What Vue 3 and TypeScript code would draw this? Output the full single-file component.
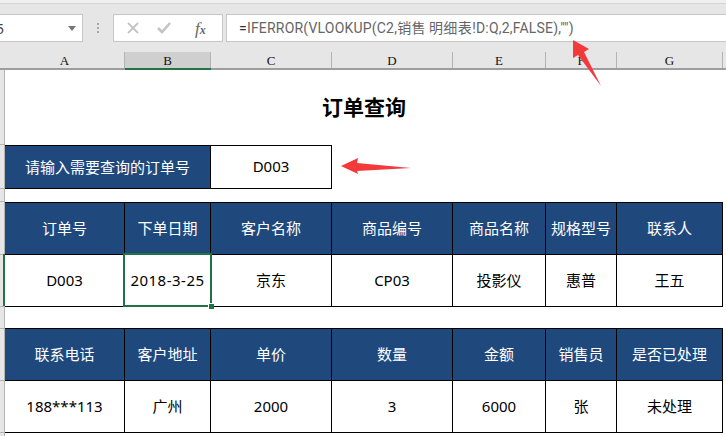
<script setup lang="ts">
const cols = [
  { name: 'A', w: 120 }, { name: 'B', w: 86 }, { name: 'C', w: 121 }, { name: 'D', w: 121 },
  { name: 'E', w: 93 }, { name: 'F', w: 71 }, { name: 'G', w: 106 },
]
const table1 = {
  head: ['订单号', '下单日期', '客户名称', '商品编号', '商品名称', '规格型号', '联系人'],
  body: ['D003', '2018-3-25', '京东', 'CP03', '投影仪', '惠普', '王五'],
}
const table2 = {
  head: ['联系电话', '客户地址', '单价', '数量', '金额', '销售员', '是否已处理'],
  body: ['188***113', '广州', '2000', '3', '6000', '张', '未处理'],
}
const tables = [table1, table2]
const ticks = [75, 44, 13, 53, 52, 22, 52, 52]
</script>

<template>
  <div class="app">
    <div class="ribbon-edge"></div>
    <div class="formula-row">
      <div class="name-box"><span class="name-text">5</span><span class="caret"></span></div>
      <div class="dots"><i></i><i></i><i></i></div>
      <div class="fx-box">
        <svg width="14" height="14" viewBox="0 0 14 14" class="ico"><path d="M2 2 L12 12 M12 2 L2 12" stroke="#c4c4c4" stroke-width="1.8" fill="none"/></svg>
        <svg width="16" height="14" viewBox="0 0 16 14" class="ico"><path d="M2 7 L6 11 L14 2" stroke="#c4c4c4" stroke-width="2.6" fill="none"/></svg>
        <span class="fx">f<small>x</small></span>
      </div>
      <div class="formula"><span class="eq">=</span><span class="fn">IFERROR(VLOOKUP(C2,<span class="cjk">销售</span><span class="cjk gap">明细表</span>!D:Q,2,FALSE),"")</span></div>
    </div>
    <div class="col-heads">
      <div class="corner"></div>
      <div v-for="c in cols" :key="c.name" class="col-head" :class="{ active: c.name === 'B' }" :style="{ width: c.w + 'px' }">{{ c.name }}</div>
    </div>
    <div class="sheet">
      <div class="row-strip">
        <i v-for="(h, k) in ticks" :key="k" :style="{ height: h + 'px' }"></i>
      </div>
      <div class="content">
        <h1 class="title">订单查询</h1>
        <div class="query">
          <div class="q-label">请输入需要查询的订单号</div>
          <div class="q-value">D003</div>
        </div>
        <div v-for="(t, i) in tables" :key="i" class="tbl" :class="'tbl' + i">
          <div v-for="(h, j) in t.head" :key="h" class="th" :style="{ width: cols[j].w + 'px' }">{{ h }}</div>
          <div v-for="(b, j) in t.body" :key="b" class="td" :class="{ date: b === '2018-3-25' }" :style="{ width: cols[j].w + 'px' }">{{ b }}</div>
        </div>
      </div>
      <div class="selection"><span class="handle"></span></div>
      <div class="row-mark"></div>
    </div>
    <svg class="arrow" width="726" height="436" viewBox="0 0 726 436">
      <path d="M341 166 L358 158 L357 163 L411 168 L357 171 L358 174 Z" fill="#f4393b"/>
      <path d="M573 40 L589 49 L584 52 L601 86 L578 55 L573 58 Z" fill="#f4393b"/>
    </svg>
  </div>
</template>

<style>
html, body { margin: 0; background: #fff; }
</style>

<style scoped>
.app {
  position: relative;
  width: 726px;
  height: 436px;
  overflow: hidden;
  background: #fff;
  font-family: "Noto Sans", "Noto Sans CJK SC", sans-serif;
  color: #000;
}
.ribbon-edge {
  height: 3px;
  background: #f0f0f0;
  border-bottom: 1px solid #d4d4d4;
}
.formula-row {
  height: 48px;
  box-sizing: border-box;
  background: #e6e6e6;
  display: flex;
  align-items: flex-start;
  padding-top: 10px;
}
.name-box {
  width: 83px;
  height: 28px;
  box-sizing: border-box;
  background: #fff;
  border: 1px solid #c6c6c6;
  border-left: 0;
  display: flex;
  align-items: center;
  justify-content: space-between;
  padding-right: 6px;
  color: #444;
  font-size: 14px;
}
.name-text { margin-left: -4px; }
.caret {
  width: 0;
  height: 0;
  border: 4px solid transparent;
  border-top: 5px solid #777;
  border-bottom: 0;
}
.dots {
  width: 30px;
  height: 28px;
  display: flex;
  flex-direction: column;
  align-items: center;
  justify-content: center;
  gap: 2px;
}
.dots i { width: 2px; height: 2px; background: #a8a8a8; display: block; }
.fx-box {
  width: 110px;
  height: 28px;
  box-sizing: border-box;
  background: #fff;
  border: 1px solid #c6c6c6;
  display: flex;
  align-items: center;
  padding-left: 12px;
  gap: 16px;
}
.ico { display: block; }
.fx {
  font-family: "Liberation Serif", serif;
  font-style: italic;
  color: #666;
  font-size: 17px;
  margin-left: 7px;
  line-height: 1;
}
.fx small { font-size: 12px; font-weight: 700; }
.formula {
  margin-left: 3px;
  flex: 1;
  height: 28px;
  box-sizing: border-box;
  background: #fff;
  border: 1px solid #c6c6c6;
  border-right: 0;
  font-family: Roboto, "Noto Sans CJK SC", sans-serif;
  font-size: 14px;
  letter-spacing: 0.2px;
  line-height: 26px;
  padding-left: 12px;
  white-space: nowrap;
}
.eq { color: #333; }
.fn { color: #666; }
.cjk { font-size: 14px; letter-spacing: 0.4px; }
.gap { margin-left: 3px; }
.col-heads {
  height: 18px;
  box-sizing: border-box;
  display: flex;
  background: #e6e6e6;
  border-bottom: 2px solid #9e9e9e;
  font-family: "Liberation Serif", serif;
  font-size: 13px;
}
.corner { width: 5px; flex: none; }
.col-head {
  flex: none;
  box-sizing: border-box;
  text-align: center;
  line-height: 18px;
  border-right: 1px solid #b4b4b4;
  color: #111;
}
.col-head.active {
  background: #cfcfcf;
  box-shadow: 0 2px 0 #217346;
  height: 16px;
}
.sheet { position: relative; display: flex; height: 366px; }
.row-strip {
  width: 4px;
  flex: none;
  background: #e6e6e6;
  border-right: 1px solid #b4b4b4;
  display: flex;
  flex-direction: column;
}
.row-strip i {
  display: block;
  box-sizing: border-box;
  flex: none;
  border-bottom: 1px solid #b4b4b4;
}
.content { flex: 1; min-width: 0; }
.title {
  margin: 0;
  height: 75px;
  width: 718px;
  text-align: center;
  font-family: "Noto Sans CJK SC", sans-serif;
  font-size: 21px;
  font-weight: 700;
  line-height: 72px;
}
.query {
  display: flex;
  height: 44px;
  box-sizing: border-box;
  border-top: 1px solid #000;
  border-bottom: 1px solid #000;
  width: 327px;
  font-size: 15px;
}
.q-label {
  width: 206px;
  background: #1f497d;
  color: #fff;
  display: flex;
  align-items: center;
  justify-content: center;
  border-right: 1px solid #000;
  box-sizing: border-box;
  padding-bottom: 2px;
}
.q-value {
  flex: 1;
  display: flex;
  align-items: center;
  justify-content: center;
  border-right: 1px solid #000;
  padding-bottom: 2px;
}
.tbl {
  display: flex;
  flex-wrap: wrap;
  width: 718px;
  border-top: 1px solid #000;
  font-size: 15px;
}
.tbl0 { margin-top: 13px; }
.tbl1 { margin-top: 21px; }
.th, .td {
  height: 52px;
  box-sizing: border-box;
  display: flex;
  align-items: center;
  justify-content: center;
  border-right: 1px solid #000;
  border-bottom: 1px solid #000;
  white-space: nowrap;
  padding-bottom: 2px;
}
.th { background: #1f497d; color: #fff; }
.date { letter-spacing: 0.5px; }
.selection {
  position: absolute;
  left: 123px;
  top: 183px;
  width: 89px;
  height: 54px;
  box-sizing: border-box;
  border: 2px solid #217346;
}
.handle {
  position: absolute;
  right: -4px;
  bottom: -4px;
  width: 5px;
  height: 5px;
  background: #217346;
  border: 1px solid #fff;
  border-right: 0;
  border-bottom: 0;
}
.row-mark {
  position: absolute;
  left: 3px;
  top: 184px;
  width: 2px;
  height: 52px;
  background: #217346;
}
.arrow { position: absolute; left: 0; top: 0; pointer-events: none; }
</style>
